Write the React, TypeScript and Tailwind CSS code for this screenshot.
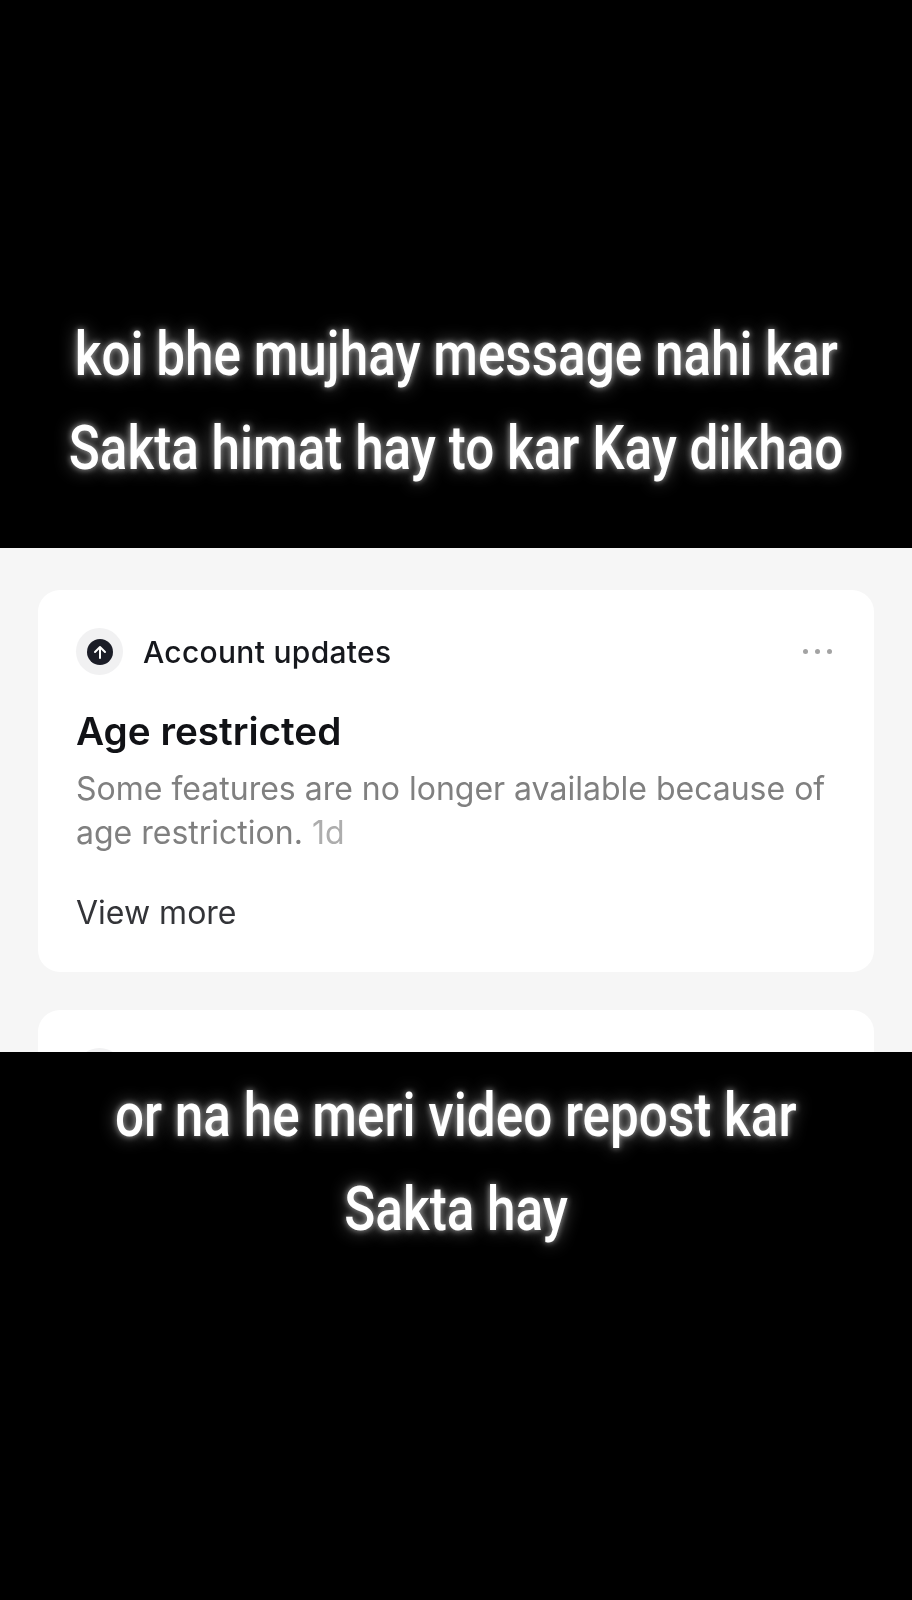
const glow = "[text-shadow:0_0_7px_rgba(255,255,255,0.6),0_0_18px_rgba(255,255,255,0.45)]";

const Caption = ({ text }: { text: string }) => (
  <div className="flex h-[94px] items-center justify-center whitespace-nowrap">
    <span
      className={`inline-block scale-x-[0.84] font-['Roboto',sans-serif] text-[61px] font-medium leading-none text-white ${glow}`}
    >
      {text}
    </span>
  </div>
);

const UpdateIcon = () => (
  <div className="flex h-[47px] w-[47px] items-center justify-center rounded-full bg-[#f1f1f2]">
    <div className="flex h-[26px] w-[26px] items-center justify-center rounded-full bg-[#1b1d27]">
      <svg className="h-4 w-4" viewBox="0 0 16 16" fill="none" stroke="#ffffff" strokeWidth={2} strokeLinecap="round" strokeLinejoin="round">
        <path d="M8 14V3M3 8l5-5 5 5" />
      </svg>
    </div>
  </div>
);

const App = () => {
  return (
    <div className="h-[1600px] w-[912px] overflow-hidden bg-black font-['Inter',sans-serif]">
      <section className="flex h-[548px] flex-col justify-end pb-[53px]">
        <Caption text="koi bhe mujhay message nahi kar" />
        <Caption text="Sakta himat hay to kar Kay dikhao" />
      </section>

      <section className="flex h-[504px] flex-col gap-[38px] overflow-hidden bg-[#f6f6f6] px-[38px] pt-[42px]">
        <article className="h-[382px] shrink-0 rounded-[22px] bg-white px-[38px] pt-[38px] blur-[0.5px]">
          <header className="flex items-center justify-between">
            <div className="flex items-center gap-[20px]">
              <UpdateIcon />
              <span className="text-[30px] font-medium leading-none tracking-[0.3px] text-[#16181d]">Account updates</span>
            </div>
            <div className="mr-[4px] flex gap-[7px]">
              <span className="h-[5px] w-[5px] rounded-full bg-[#a3a3a3]" />
              <span className="h-[5px] w-[5px] rounded-full bg-[#a3a3a3]" />
              <span className="h-[5px] w-[5px] rounded-full bg-[#a3a3a3]" />
            </div>
          </header>
          <h2 className="mt-[33px] text-[38.7px] font-semibold leading-[46px] text-[#111216]">Age restricted</h2>
          <p className="mt-[13px] text-[32px] leading-[44px] text-[#808080]">
            Some features are no longer available because of age restriction. <span className="text-[#adadad]">1d</span>
          </p>
          <p className="mt-[36px] text-[32px] leading-[44px] text-[#333438]">View more</p>
        </article>
        <article className="h-[382px] shrink-0 rounded-[22px] bg-white px-[38px] pt-[38px] blur-[0.5px]">
          <UpdateIcon />
        </article>
      </section>

      <section className="flex h-[548px] flex-col pt-[16px]">
        <Caption text="or na he meri video repost kar" />
        <Caption text="Sakta hay" />
      </section>
    </div>
  );
};

export default App;
